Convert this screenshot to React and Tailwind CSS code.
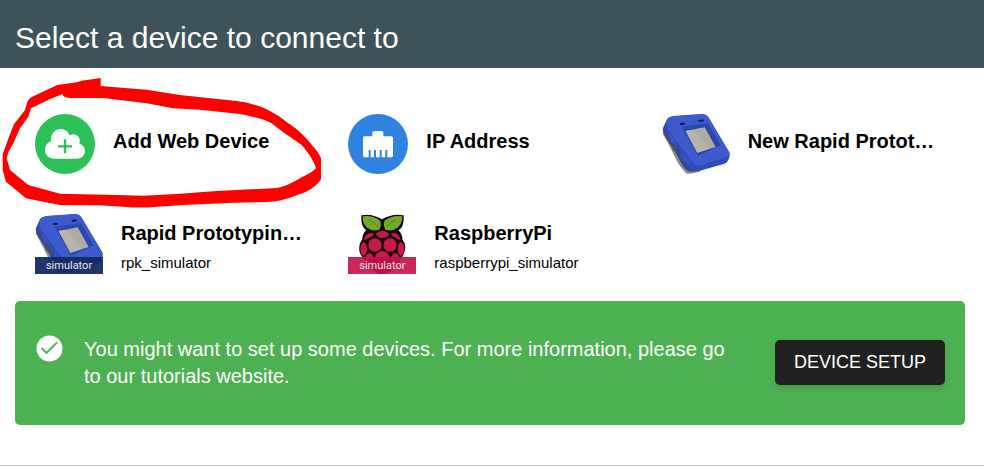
import React from "react";

function CloudIcon() {
  return (
    <svg viewBox="0 0 180 180" className="size-[60px] shrink-0" aria-hidden="true">
      <circle cx="90" cy="90" r="90" fill="#2cc059" />
      <path
        d="M58 134C42 134 30 123 30 108C30 96 37 86 48 82C46 62 58 45 77 45C89 45 99 51 104 65C112 59 118 60 122 62C130 65 136 74 134 83C132 86 133 88 136 90C145 94 150 102 150 111C150 124 140 134 127 134Z"
        fill="#fff"
      />
      <path d="M90 76V118M69 97H111" stroke="#2cc059" strokeWidth="7" fill="none" />
    </svg>
  );
}

function EthernetIcon() {
  return (
    <svg viewBox="0 0 180 180" className="size-[60px] shrink-0" aria-hidden="true">
      <circle cx="90" cy="90" r="90" fill="#2f82e0" />
      <path
        d="M49 67H73V56Q73 51 78 51H101Q106 51 106 56V67H130Q135 67 135 72V125Q135 130 130 130H49Q45 130 45 125V72Q45 67 49 67Z"
        fill="#fff"
      />
      <path d="M65 108V131M81 108V131M98 108V131M115 108V131" stroke="#2f82e0" strokeWidth="6" />
    </svg>
  );
}

function KitDrawing() {
  return (
    <svg viewBox="33 27 204 180" className="h-[60px] w-[68px] shrink-0" aria-hidden="true">
      <path d="M36 70L36 86L60 132L82 176L102 202Q106 208 118 206L146 200L130 160L44 58Z" fill="#8b8c86" />
      <path d="M35 72L44 52L130 150L148 198L118 200Q106 198 96 184L72 140L38 88Z" fill="#34479a" />
      <path d="M38 80L50 92L56 110L44 98ZM60 114L76 128L82 148L66 136Z" fill="#4a4e60" />
      <path d="M48 42Q54 35 67 33L150 27Q166 26 172 36L235 142Q238 150 233 162L228 172Q222 177 210 179L144 198Q126 199 116 182L48 84Q38 60 48 42Z" fill="#2f4cb8" />
      <path d="M50 42Q56 36 67 34L150 28Q165 27 171 37L234 141Q237 151 229 155L148 181Q134 184 126 172L52 76Q44 54 50 42Z" fill="#3d5bcb" />
      <path d="M92 65L171 55L209 121L141 153Z" fill="#2c47ab" />
      <path d="M104 78L161 67L194 126L139 143Z" fill="#aeaba5" />
      <path d="M104 78L124 74L176 131L139 143Z" fill="#b6b4ae" />
      <path d="M87 57L101 56M143 48L158 46" stroke="#101b4d" strokeWidth="6" />
      <path d="M50 84L68 98L76 118L60 110ZM90 146L108 160L118 180L98 168Z" fill="#3956c4" />
    </svg>
  );
}

function RaspberryDrawing() {
  return (
    <svg viewBox="24 27 204 180" className="h-[60px] w-[68px] shrink-0" aria-hidden="true">
      <path
        d="M64 31Q94 24 126 43Q158 24 191 31Q193 66 176 76Q188 90 187 103Q200 118 194 139Q189 157 180 164Q174 184 160 191Q142 206 127 207Q112 206 94 191Q80 184 74 164Q62 154 58 137Q56 117 67 103Q66 89 78 76Q62 63 64 31Z"
        fill="#17070c"
      />
      <path d="M68 34Q98 29 121 48Q125 63 117 75Q95 80 80 67Q67 55 68 34Z" fill="#75a928" />
      <path d="M187 34Q156 29 133 48Q129 63 137 75Q159 80 174 67Q187 55 187 34Z" fill="#75a928" />
      <path d="M88 45Q103 52 114 66M167 45Q151 52 140 66" stroke="#3f661a" strokeWidth="2" fill="none" />
      <g fill="#c51a4a">
        <path d="M107 87Q127 68 148 87Q141 99 127 99Q114 99 107 87Z" />
        <path d="M73 103Q77 82 99 84Q106 92 73 106ZM181 103Q177 82 155 84Q148 92 181 106Z" />
        <ellipse cx="105" cy="120" rx="20" ry="20" />
        <ellipse cx="150" cy="120" rx="20" ry="20" />
        <ellipse cx="71" cy="132" rx="10" ry="20" />
        <ellipse cx="183" cy="132" rx="10" ry="20" />
        <circle cx="127" cy="160" r="22" />
        <ellipse cx="88" cy="165" rx="14" ry="20" />
        <ellipse cx="166" cy="165" rx="14" ry="20" />
        <ellipse cx="127" cy="195" rx="19" ry="9" />
      </g>
    </svg>
  );
}

function Simulated({ children, bar }) {
  return (
    <span className="relative block h-[60px] w-[68px] shrink-0">
      {children}
      <span className={`absolute inset-x-0 bottom-0 flex h-[17px] items-center justify-center font-['Roboto',sans-serif] text-[11px] leading-[17px] text-gray-200 ${bar}`}>
        simulator
      </span>
    </span>
  );
}

function Device({ picture, name, detail }) {
  return (
    <li>
      <button type="button" className="flex h-[100px] w-full items-start gap-[18px] py-5 pl-[13px] pr-[25px] text-left">
        {picture}
        <span className={`block min-w-0 ${detail ? "pt-1.5" : "pt-3.5"}`}>
          <span className="block truncate text-xl leading-[26px] font-bold">{name}</span>
          {detail && <span className="block truncate pt-[7px] text-[15px] leading-5">{detail}</span>}
        </span>
      </button>
    </li>
  );
}

function MarkerCircle() {
  return (
    <svg viewBox="0 0 990 405" className="pointer-events-none absolute top-[7px] left-0 h-[135px] w-[330px]" aria-hidden="true">
      <path
        fill="#fe0000"
        fillRule="evenodd"
        d="M302 9L245 17L230 22L172 30L95 66Q82 75 80 88L75 105L42 148L30 178L20 205L8 238V285L18 320L78 370L130 380L180 390L300 391L370 395Q420 400 470 395L550 390L700 383L800 381Q840 379 865 370L915 352Q950 335 963 312V250Q958 235 940 215Q905 170 865 145Q835 120 800 103Q755 83 710 78L540 60L440 44L302 33V9ZM188 57Q188 68 210 69H310L440 85L520 100L600 104L720 117Q790 130 815 145L850 172L905 210Q940 250 948 280Q940 290 905 307Q860 335 830 339L650 348L530 357L430 362L350 360L180 356L85 330L30 285L20 250L25 232L40 205L60 160L85 125L93 100L150 72Z"
      />
    </svg>
  );
}

export default function App() {
  return (
    <main className="border-b border-[#cacaca] bg-white pb-10 font-['Liberation_Sans',Arial,sans-serif] text-black">
      <header className="bg-[#3e5359] px-[15px] pt-5 pb-3">
        <h1 className="text-3xl leading-9 text-white">Select a device to connect to</h1>
      </header>
      <section className="relative px-[22px] pt-[26px] pb-[7px]" aria-label="Devices">
        <ul className="grid grid-cols-3">
          <Device picture={<CloudIcon />} name="Add Web Device" />
          <Device picture={<EthernetIcon />} name="IP Address" />
          <Device picture={<KitDrawing />} name="New Rapid Prototyping Kit" />
          <Device
            picture={<Simulated bar="bg-[#162a62]/95"><KitDrawing /></Simulated>}
            name="Rapid Prototyping Kit"
            detail="rpk_simulator"
          />
          <Device
            picture={<Simulated bar="bg-[#c31146]/90"><RaspberryDrawing /></Simulated>}
            name="RaspberryPi"
            detail="raspberrypi_simulator"
          />
        </ul>
        <MarkerCircle />
      </section>
      <section className="mr-[19px] ml-[15px] flex items-start rounded-[5px] bg-[#4db051] pt-[34px] pb-9 pr-5 pl-[21px] text-white">
        <svg viewBox="0 0 27 27" className="mr-[21px] size-[27px] shrink-0" aria-hidden="true">
          <circle cx="13.5" cy="13.5" r="13" fill="#fff" />
          <path d="M5.5 13L10.5 18L21 7.5" stroke="#4db051" strokeWidth="1.8" fill="none" />
        </svg>
        <p className="-mb-px min-w-0 flex-1 pt-px pr-8 text-xl leading-[27px]">
          You might want to set up some devices. For more information, please go to our tutorials website.
        </p>
        <button type="button" className="mt-[5px] h-[45px] w-[170px] shrink-0 rounded-[5px] bg-[#212121] pb-0.5 text-lg shadow-md">
          DEVICE SETUP
        </button>
      </section>
    </main>
  );
}
